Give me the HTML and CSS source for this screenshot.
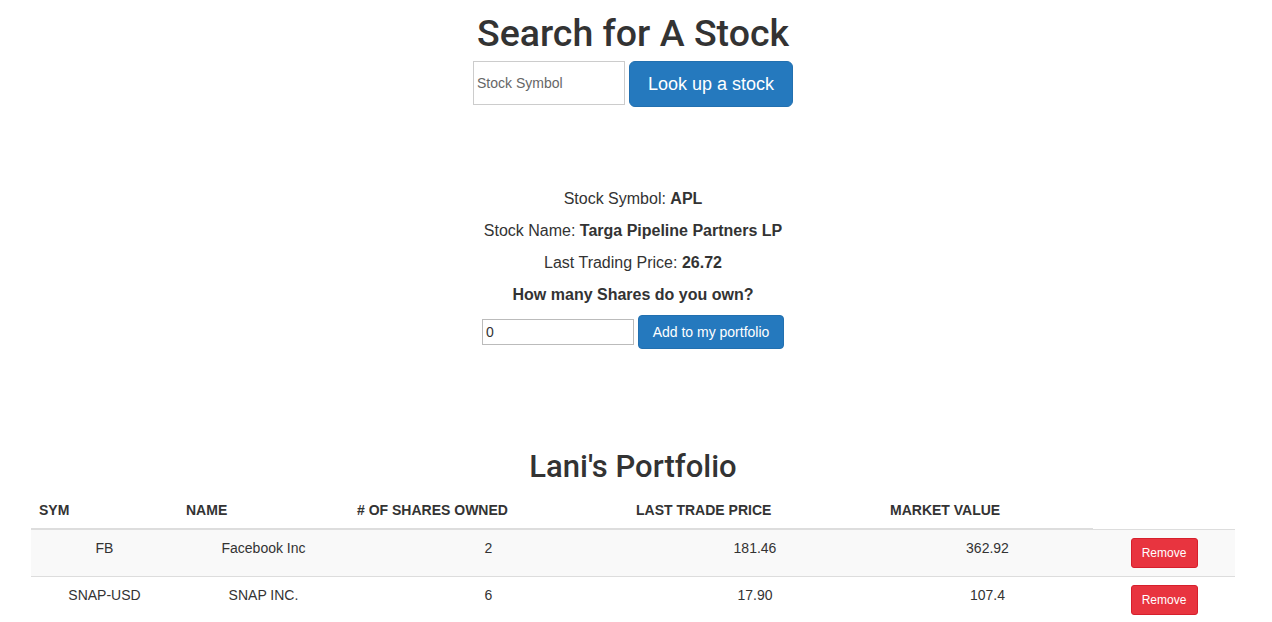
FILE: index.html
```html
<!DOCTYPE html>
<html>
<head>
<meta charset="utf-8">
<title>Stock Portfolio</title>
<link rel="stylesheet" href="styles.css">
</head>
<body>
<div class="container">
  <h1 class="title">Search for A Stock</h1>
  <form class="search-form">
    <input class="search-input" type="text" placeholder="Stock Symbol">
    <button class="btn btn-primary btn-lg" type="button">Look up a stock</button>
  </form>

  <section class="info">
    <p>Stock Symbol: <b>APL</b></p>
    <p>Stock Name: <b>Targa Pipeline Partners LP</b></p>
    <p>Last Trading Price: <b>26.72</b></p>
    <p class="question"><b>How many Shares do you own?</b></p>
    <form class="add-form">
      <input class="shares-input" type="text" value="0">
      <button class="btn btn-primary btn-add" type="button">Add to my portfolio</button>
    </form>
  </section>

  <h2 class="portfolio-title">Lani's Portfolio</h2>
  <table class="table">
    <colgroup>
      <col class="c1"><col class="c2"><col class="c3"><col class="c4"><col class="c5"><col class="c6">
    </colgroup>
    <thead>
      <tr>
        <th>Sym</th>
        <th>Name</th>
        <th># of Shares Owned</th>
        <th>Last Trade Price</th>
        <th>Market Value</th>
      </tr>
    </thead>
    <tbody>
      <tr class="striped">
        <td>FB</td>
        <td>Facebook Inc</td>
        <td>2</td>
        <td>181.46</td>
        <td>362.92</td>
        <td><button class="btn btn-danger btn-sm" type="button">Remove</button></td>
      </tr>
      <tr>
        <td>SNAP-USD</td>
        <td>SNAP INC.</td>
        <td>6</td>
        <td>17.90</td>
        <td>107.4</td>
        <td><button class="btn btn-danger btn-sm" type="button">Remove</button></td>
      </tr>
    </tbody>
  </table>
</div>
</body>
</html>
```

FILE: styles.css
```css
* { box-sizing: border-box; }

html, body {
  margin: 0;
  padding: 0;
  background: #fff;
}

body {
  font-family: "Liberation Sans", Arial, Helvetica, sans-serif;
  font-size: 14px;
  line-height: 20px;
  color: #333;
}

.container {
  margin: 0 37px 0 31px;
}

.title {
  margin: 13px 0 8px;
  font-family: Roboto, "Liberation Sans", Arial, sans-serif;
  font-size: 37.5px;
  line-height: 40px;
  font-weight: 500;
  text-align: center;
  color: #333;
}

.search-form {
  display: flex;
  justify-content: center;
  align-items: flex-start;
  gap: 4px;
  margin: 0;
}

.search-input {
  width: 152px;
  height: 44px;
  border: 1px solid #ccc;
  border-radius: 0;
  padding: 0 3px;
  font-family: "Liberation Sans", Arial, sans-serif;
  font-size: 14px;
  color: #333;
  outline: none;
}

.search-input::placeholder { color: #666; }

.btn {
  font-family: "Liberation Sans", Arial, sans-serif;
  border: 1px solid transparent;
  cursor: pointer;
  color: #fff;
  white-space: nowrap;
}

.btn-primary {
  background: #2579be;
  border-color: #2270b0;
  height: 34px;
  padding: 6px 12px;
  font-size: 14px;
  line-height: 20px;
  border-radius: 4px;
}

.btn-add {
  width: 146px;
  padding: 6px 8px;
}

.btn-lg {
  height: 46px;
  width: 164px;
  padding: 10px 12px;
  font-size: 18px;
  line-height: 24px;
  border-radius: 6px;
}

.btn-danger {
  background: #e8343f;
  border-color: #d61f2c;
}

.btn-sm {
  height: 30px;
  width: 67px;
  padding: 5px 6px;
  font-size: 12px;
  line-height: 18px;
  border-radius: 3px;
}

.info {
  margin-top: 81px;
  text-align: center;
}

.info p {
  margin: 0 0 10px;
  font-size: 16px;
  line-height: 22px;
}

.info p.question { margin-bottom: 9px; }

.info b { font-weight: 700; }

.add-form {
  display: flex;
  justify-content: center;
  align-items: center;
  gap: 4px;
  margin: 0;
}

.shares-input {
  width: 152px;
  height: 26px;
  border: 1px solid #bbb;
  padding: 0 3px;
  font-family: "Liberation Sans", Arial, sans-serif;
  font-size: 14px;
  color: #333;
  outline: none;
}

.portfolio-title {
  margin: 101px 0 9px;
  font-family: Roboto, "Liberation Sans", Arial, sans-serif;
  font-size: 31px;
  line-height: 33px;
  font-weight: 500;
  text-align: center;
  color: #333;
}

.table {
  width: 100%;
  border-collapse: collapse;
  border-spacing: 0;
  table-layout: fixed;
}

.c1 { width: 147px; }
.c2 { width: 171px; }
.c3 { width: 279px; }
.c4 { width: 254px; }
.c5 { width: 211px; }
.c6 { width: 142px; }

.table th {
  padding: 8px;
  text-align: left;
  font-size: 14px;
  line-height: 20px;
  font-weight: 700;
  text-transform: uppercase;
  border-bottom: 2px solid #ddd;
  vertical-align: bottom;
}

.table td {
  padding: 8px;
  text-align: center;
  vertical-align: top;
  font-size: 14px;
  line-height: 20px;
  border-top: 1px solid #ddd;
}

.table tr.striped td { background: #f9f9f9; }
```
